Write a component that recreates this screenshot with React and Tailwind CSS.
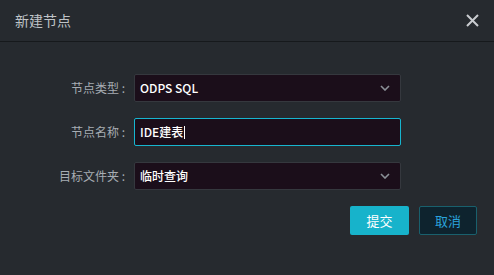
import React from 'react'

const font = { fontFamily: '"Noto Sans CJK SC", "Noto Sans", sans-serif' }

const Chevron = () => (
  <svg width="10" height="6" viewBox="0 0 10 6" className="shrink-0">
    <path d="M1 1 L5 5 L9 1" fill="none" stroke="#8b9097" strokeWidth="1.6" />
  </svg>
)

const Row = ({ label, children, focused }) => (
  <div className="flex items-center">
    <div className="w-[126px] text-right text-[12px] text-[#a7adb3] pr-[1px]">{label}</div>
    <div
      className={
        focused
          ? 'ml-[8px] w-[267px] h-[28px] flex items-center px-[5px] bg-[#1b0e1a] border border-[#17b5cf] rounded-[2px]'
          : 'ml-[8px] w-[267px] h-[28px] flex items-center px-[5px] bg-[#1b0e1a] border border-[#35383e] rounded-[2px]'
      }
    >
      {children}
    </div>
  </div>
)

const App = () => {
  return (
    <div style={font} className="w-[494px] h-[275px] bg-[#262a2f] flex flex-col">
      <div className="h-[42px] flex items-center justify-between pl-[15px] pr-[15px] border-b border-[#16191c]">
        <span className="text-[14px] text-[#bfc3c7]">新建节点</span>
        <svg width="13" height="13" viewBox="0 0 13 13">
          <path d="M1 1 L12 12 M12 1 L1 12" stroke="#c9ccd0" strokeWidth="2" />
        </svg>
      </div>
      <div className="flex flex-col gap-[16px] pt-[32px]">
        <Row label="节点类型 :">
          <span className="flex-1 text-[12px] font-medium text-white">ODPS SQL</span>
          <span className="mr-[5px]"><Chevron /></span>
        </Row>
        <Row label="节点名称 :" focused>
          <span className="text-[12px] font-medium text-white">IDE建表</span>
          <span className="w-[1px] h-[13px] bg-white ml-[1px]"></span>
        </Row>
        <Row label="目标文件夹 :">
          <span className="flex-1 text-[12px] font-medium text-white">临时查询</span>
          <span className="mr-[5px]"><Chevron /></span>
        </Row>
      </div>
      <div className="flex justify-end gap-[10px] pr-[17px] mt-[16px]">
        <button className="w-[59px] h-[29px] bg-[#17b3cb] rounded-[2px] text-[13px] text-white">提交</button>
        <button className="w-[58px] h-[29px] bg-[#0e232e] border border-[#19606d] rounded-[2px] text-[13px] text-[#2aa3dc]">取消</button>
      </div>
    </div>
  )
}

export default App
